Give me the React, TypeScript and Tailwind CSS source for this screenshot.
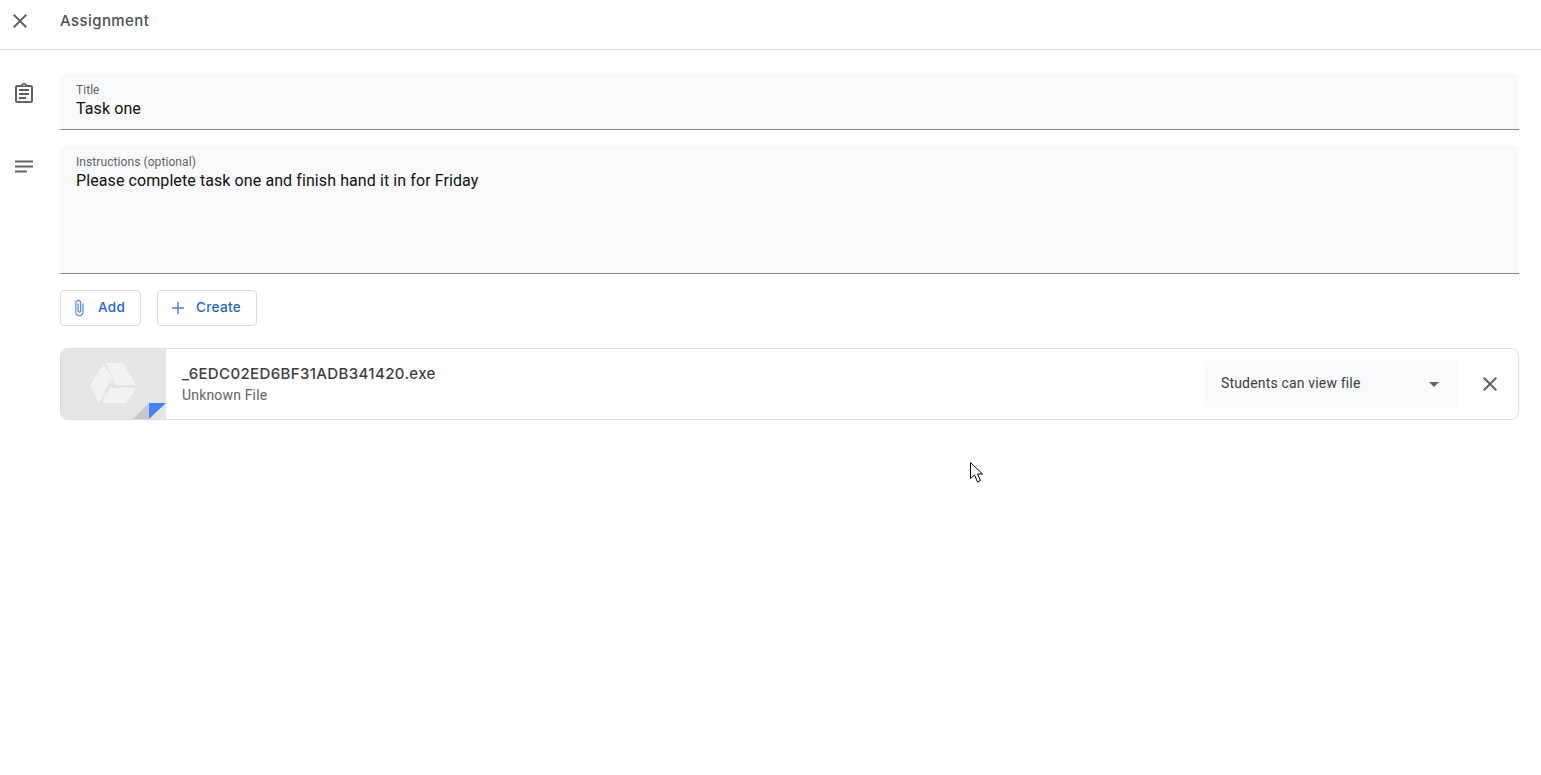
export default function App() {
  return (
    <div className="relative min-h-[775px] bg-white font-['Roboto',sans-serif] text-[#202124]">
      <header className="flex h-[50px] items-start border-b border-[#dadce0]">
        <div className="mt-[9px] flex w-[40px] justify-center">
          <svg width="24" height="24" viewBox="0 0 24 24" fill="#5f6368"><path d="M19 6.41 17.59 5 12 10.59 6.41 5 5 6.41 10.59 12 5 17.59 6.41 19 12 13.41 17.59 19 19 17.59 13.41 12z" /></svg>
        </div>
        <div className="ml-[20px] mt-[11px] font-['Inter',sans-serif] text-[15px] font-medium leading-5 tracking-[0.42px] text-[#4d5156]">Assignment</div>
      </header>

      <main className="pl-[60px] pr-[22px] pt-[24px]">
        <div className="relative">
          <div className="absolute left-[-48px] top-[8px]">
            <svg width="24" height="24" viewBox="0 0 24 24" fill="#5f6368"><path d="M7 15h7v2H7zm0-4h10v2H7zm0-4h10v2H7zm12-4h-4.18C14.4 1.84 13.3 1 12 1c-1.3 0-2.4.84-2.82 2H5c-.14 0-.27.01-.4.04-.39.08-.74.28-1.01.55-.18.18-.33.4-.43.64-.1.23-.16.49-.16.77v14c0 .27.06.54.16.78s.25.45.43.64c.27.27.62.47 1.01.55.13.02.26.03.4.03h14c1.1 0 2-.9 2-2V5c0-1.1-.9-2-2-2zm-7-.25c.41 0 .75.34.75.75s-.34.75-.75.75-.75-.34-.75-.75.34-.75.75-.75zM19 19H5V5h14v14z" /></svg>
          </div>
          <div className="h-[56px] rounded-t-[4px] border-b border-[#80868b] bg-[#f8f9fa] px-4 pt-[9px]">
            <div className="text-xs leading-[14px] tracking-[0.05px] text-[#5f6368]">Title</div>
            <div className="mt-[1px] text-base leading-[22px] tracking-[0.1px] text-[#111]">Task one</div>
          </div>
        </div>

        <div className="relative mt-[16px]">
          <div className="absolute left-[-48px] top-[9px]">
            <svg width="24" height="24" viewBox="0 0 24 24" fill="#5f6368"><path d="M3 5h18v2H3zm0 5h18v2H3zm0 5h12v2H3z" transform="translate(0 .5)" /></svg>
          </div>
          <div className="h-[128px] rounded-t-[4px] border-b border-[#80868b] bg-[#f8f9fa] px-4 pt-[9px]">
            <div className="text-xs leading-[14px] tracking-[0.08px] text-[#5f6368]">Instructions (optional)</div>
            <div className="mt-[1px] text-base leading-[22px] tracking-[0.09px] text-[#111]">Please complete task one and finish hand it in for Friday</div>
          </div>
        </div>

        <div className="mt-[16px] flex gap-4">
          <button className="flex h-[36px] w-[81px] items-center rounded-[4px] border border-[#dadce0] pl-[10px]">
            <svg width="18" height="18" viewBox="0 0 24 24" fill="#4285f4" className="-translate-x-[1px]"><path d="M16.5 6v11.5c0 2.21-1.79 4-4 4s-4-1.79-4-4V5c0-1.38 1.12-2.5 2.5-2.5s2.5 1.12 2.5 2.5v10.5c0 .55-.45 1-1 1s-1-.45-1-1V6H10v9.5c0 1.38 1.12 2.5 2.5 2.5s2.5-1.12 2.5-2.5V5c0-2.21-1.79-4-4-4S7 2.79 7 5v12.5c0 3.04 2.46 5.5 5.5 5.5s5.5-2.46 5.5-5.5V6h-1.5z" /></svg>
            <span className="mb-[1px] ml-[9px] font-['Inter',sans-serif] text-[13.5px] font-medium tracking-[0.35px] text-[#1967d2]">Add</span>
          </button>
          <button className="flex h-[36px] w-[100px] items-center rounded-[4px] border border-[#dadce0] pl-[11px]">
            <svg width="18" height="18" viewBox="0 0 24 24" fill="#4285f4"><path d="M20 13h-7v7h-2v-7H4v-2h7V4h2v7h7z" /></svg>
            <span className="mb-[1px] ml-[9px] font-['Inter',sans-serif] text-[13.5px] font-medium tracking-[0.35px] text-[#1967d2]">Create</span>
          </button>
        </div>

        <div className="mt-[22px] flex h-[72px] items-stretch overflow-hidden rounded-[8px] border border-[#dadce0]">
          <div className="relative w-[105px] shrink-0 bg-[#e5e5e5]">
            <svg className="ml-[29px] mt-[14px]" width="46" height="40" viewBox="0 0 46 40" fill="#f2f2f2">
              <path d="M13 1l9 13-13 26L0 23z" />
              <path d="M16 0h17l13 22H26z" />
              <path d="M20 25h26L36 40H12z" />
            </svg>
            <svg className="absolute bottom-0 right-0" width="33" height="16" viewBox="0 0 33 16">
              <polygon points="16,0 16,16 0,16" fill="#c8c8c8" />
              <polygon points="16,0 33,0 16,16" fill="#4285f4" />
            </svg>
          </div>
          <div className="flex min-w-0 flex-1 flex-col justify-center pl-4 pt-[2px]">
            <div className="font-['Inter',sans-serif] text-[15px] font-medium leading-5 tracking-[0.37px] text-[#3c4043]">_6EDC02ED6BF31ADB341420.exe</div>
            <div className="text-sm leading-[22px] tracking-[0.17px] text-[#5f6368]">Unknown File</div>
          </div>
          <div className="my-[11px] flex w-[253px] items-center justify-between rounded-[4px] bg-[#f8f9fa] pl-4 pr-[19px]">
            <span className="mb-[2px] text-sm tracking-[0.17px] text-[#3c4043]">Students can view file</span>
            <svg width="10" height="5" viewBox="0 0 10 5" fill="#5f6368"><path d="M0 0h10L5 5z" /></svg>
          </div>
          <div className="flex w-[60px] items-center justify-center pl-[4px]">
            <svg width="24" height="24" viewBox="0 0 24 24" fill="#5f6368"><path d="M19 6.41 17.59 5 12 10.59 6.41 5 5 6.41 10.59 12 5 17.59 6.41 19 12 13.41 17.59 19 19 17.59 13.41 12z" /></svg>
          </div>
        </div>
      </main>

      <svg className="absolute left-[970px] top-[462px]" width="13" height="22" viewBox="0 0 13 22">
        <path d="M.5.5v16l4-3.5 3 7 3-1.5-3-6.5h5z" fill="#fff" stroke="#000" strokeWidth="1" />
      </svg>
    </div>
  );
}
